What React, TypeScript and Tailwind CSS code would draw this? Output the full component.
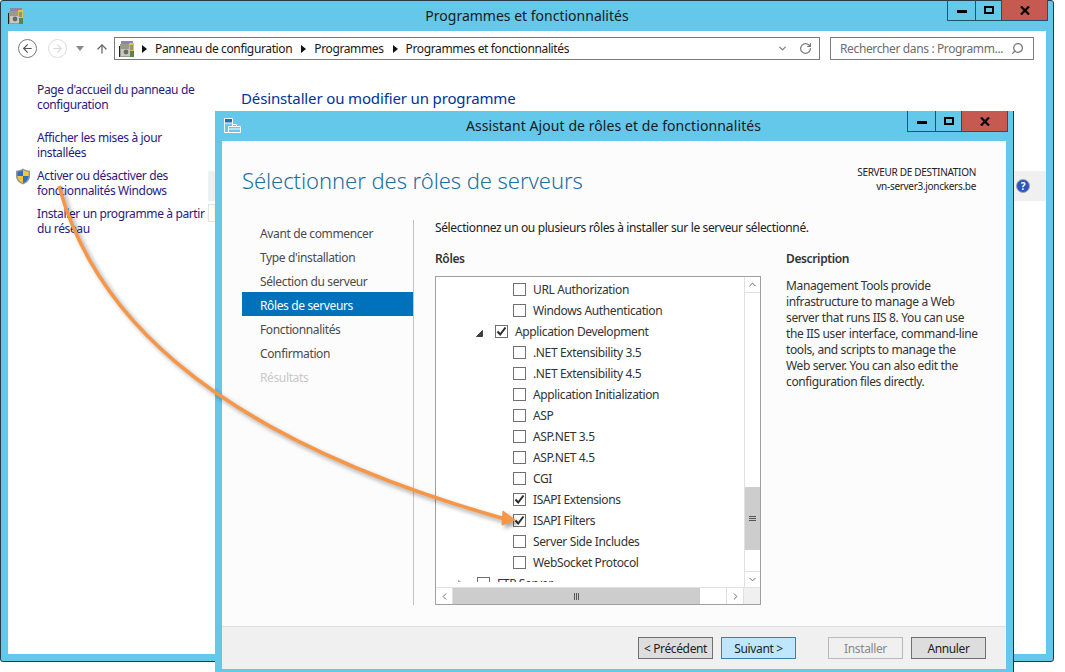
import React from 'react';
import { ArrowLeft, ArrowRight, ArrowUp, RotateCw, Search, ChevronUp, ChevronDown, ChevronLeft, ChevronRight } from 'lucide-react';

type Row = { label: string; level: number; checked?: boolean; tree?: 'open' | 'closed' };

const rows: Row[] = [
  { label: 'URL Authorization', level: 2 },
  { label: 'Windows Authentication', level: 2 },
  { label: 'Application Development', level: 1, checked: true, tree: 'open' },
  { label: '.NET Extensibility 3.5', level: 2 },
  { label: '.NET Extensibility 4.5', level: 2 },
  { label: 'Application Initialization', level: 2 },
  { label: 'ASP', level: 2 },
  { label: 'ASP.NET 3.5', level: 2 },
  { label: 'ASP.NET 4.5', level: 2 },
  { label: 'CGI', level: 2 },
  { label: 'ISAPI Extensions', level: 2, checked: true },
  { label: 'ISAPI Filters', level: 2, checked: true },
  { label: 'Server Side Includes', level: 2 },
  { label: 'WebSocket Protocol', level: 2 },
  { label: 'FTP Server', level: 0, tree: 'closed' },
];

const steps = ['Avant de commencer', "Type d'installation", 'Sélection du serveur', 'Rôles de serveurs', 'Fonctionnalités', 'Confirmation', 'Résultats'];

const links = [
  ['Page d\'accueil du panneau de', 'configuration'],
  ['Afficher les mises à jour', 'installées'],
  ['Activer ou désactiver des', 'fonctionnalités Windows'],
  ['Installer un programme à partir', 'du réseau'],
];

const WindowButtons = () => (
  <div className="flex h-[21px] -mt-px justify-self-end border border-t-0 border-[#24506a]">
    <div className="w-[28px] flex items-center justify-center border-r border-[#24506a]">
      <div className="w-[10px] h-[3px] bg-black mt-[3px]"></div>
    </div>
    <div className="w-[26px] flex items-center justify-center border-r border-[#24506a]">
      <div className="w-[10px] h-[8px] border-2 border-black"></div>
    </div>
    <div className="w-[45px] flex items-center justify-center bg-[#c45a50]">
      <svg width="10" height="9" viewBox="0 0 10 9"><path d="M1 .5 L9 8.5 M9 .5 L1 8.5" stroke="#000" strokeWidth="2.2" /></svg>
    </div>
  </div>
);

const ProgramsIcon = () => (
  <svg width="16" height="16" viewBox="0 0 16 16" className="shrink-0">
    <rect x="2" y="0" width="12" height="3" fill="#8a86b0" />
    <rect x="1" y="3" width="14" height="13" fill="#9a9a8a" />
    <rect x="10" y="2" width="5" height="8" fill="#e8c040" />
    <rect x="11" y="4" width="3" height="5" fill="#8a9a70" />
    <rect x="11" y="10" width="4" height="6" fill="#4f8a50" />
    <rect x="2" y="8" width="9" height="7" fill="#c8c8c0" />
    <circle cx="7" cy="11" r="2.4" fill="#6a6a60" />
    <rect x="0" y="5" width="1" height="11" fill="#222" />
  </svg>
);

const Shield = () => (
  <svg width="16" height="17" viewBox="0 0 16 17" className="shrink-0">
    <path d="M8 .5 C10 2 12.5 2.6 15 2.7 L15 8 C15 12 12 15 8 16.5 C4 15 1 12 1 8 L1 2.7 C3.5 2.6 6 2 8 .5 Z" fill="#8f979c" />
    <path d="M8 2 L8 8 L2.5 8 L2.5 3.8 C4.5 3.7 6.5 3 8 2 Z" fill="#2f6fc4" />
    <path d="M8 2 C9.5 3 11.5 3.7 13.5 3.8 L13.5 8 L8 8 Z" fill="#f3c832" />
    <path d="M2.5 8 L8 8 L8 15 C5 13.8 2.7 11.5 2.5 8 Z" fill="#f3c832" />
    <path d="M8 8 L13.5 8 C13.3 11.5 11 13.8 8 15 Z" fill="#2f6fc4" />
  </svg>
);

const Crumb = () => (
  <svg width="5" height="8" viewBox="0 0 5 8" className="shrink-0"><path d="M0 0 L5 4 L0 8 Z" fill="#111" /></svg>
);

const Checkbox = ({ checked }: { checked?: boolean }) => (
  <div className="w-[13px] h-[13px] shrink-0 border border-[#707070] bg-white flex items-center justify-center">
    {checked && (
      <svg width="11" height="11" viewBox="0 0 11 11"><path d="M1.5 5.5 L4.2 8.5 L9.5 1.5" fill="none" stroke="#2b2b2b" strokeWidth="2" /></svg>
    )}
  </div>
);

const ScrollBtn = ({ children, className }: { children: React.ReactNode; className: string }) => (
  <div className={`flex items-center justify-center text-[#606060] ${className}`}>{children}</div>
);

const TreeRow = ({ row }: { row: Row }) => (
  <div className={`h-[21px] flex items-center whitespace-nowrap ${row.level === 2 ? 'pl-[77px]' : row.level === 1 ? 'pl-[59px]' : 'pl-[41px]'}`}>
    {row.tree && (
      <div className="w-0 relative">
        {row.tree === 'open' ? (
          <svg width="7" height="7" viewBox="0 0 7 7" className={row.level === 1 ? '-ml-[19px] mt-[3px]' : ''}><path d="M6.5 .5 L6.5 6.5 L.5 6.5 Z" fill="#404040" stroke="#404040" /></svg>
        ) : (
          <svg width="6" height="8" viewBox="0 0 6 8" className="-ml-[19px]"><path d="M.5 .5 L5 4 L.5 7.5 Z" fill="#fff" stroke="#a0a0a0" /></svg>
        )}
      </div>
    )}
    <Checkbox checked={row.checked} />
    <span className="ml-[7px] text-[#333]">{row.label}</span>
  </div>
);

const FooterBtn = ({ label, tone }: { label: string; tone: 'normal' | 'focus' | 'off' }) => {
  const cls = tone === 'focus' ? 'bg-[#bee6fd] border-[#3c7fb1] text-[#222]' : tone === 'off' ? 'bg-[#f0f0f0] border-[#b9b9b9] text-[#8a8a8a]' : 'bg-[#dddddd] border-[#707070] text-[#222]';
  return <div className={`w-[75px] h-[22px] border flex items-center justify-center ${cls}`}>{label}</div>;
};

export default function App() {
  return (
    <div className="relative w-[1065px] h-[672px] overflow-hidden bg-white text-[12px] leading-[15px] tracking-[-0.37px] font-['Noto_Sans',sans-serif]">
      {/* back window */}
      <div className="absolute left-0 top-0 w-[1054px] h-[662px] flex flex-col border border-[#2b3a42] rounded-[3px] bg-[#63c8ea] px-[7px] pb-[7px]">
        <div className="h-[30px] -mx-[2px] grid grid-cols-[1fr_auto_1fr] items-start shrink-0">
          <div className="mt-[7px] ml-[2px]"><ProgramsIcon /></div>
          <div className="text-[14px] leading-[30px] tracking-normal text-[#1a1a1a]">Programmes et fonctionnalités</div>
          <WindowButtons />
        </div>
        <div className="flex-1 bg-white flex flex-col min-h-0">
          <div className="h-[35px] pt-[6px] flex items-start shrink-0">
            <div className="h-[23px] flex items-center">
              <div className="ml-[10px] w-[19px] h-[19px] rounded-full border border-[#7a7a7a] flex items-center justify-center text-[#555]"><ArrowLeft size={13} strokeWidth={2} /></div>
              <div className="ml-[11px] w-[19px] h-[19px] rounded-full border border-[#dcdcdc] flex items-center justify-center text-[#d8d8d8]"><ArrowRight size={13} strokeWidth={2} /></div>
              <svg width="8" height="5" viewBox="0 0 8 5" className="ml-[9px]"><path d="M0 0 H8 L4 5 Z" fill="#8a8a8a" /></svg>
              <div className="ml-[11px] text-[#666]"><ArrowUp size={14} strokeWidth={2.2} /></div>
            </div>
            <div className="ml-[5px] w-[706px] h-[23px] border border-[#7a7a7a] flex items-center pl-[4px] pr-[7px]">
              <ProgramsIcon />
              <div className="ml-[7px]"><Crumb /></div>
              <span className="ml-[8px] text-[#1a1a1a]">Panneau de configuration</span>
              <div className="ml-[9px]"><Crumb /></div>
              <span className="ml-[8px] text-[#1a1a1a]">Programmes</span>
              <div className="ml-[9px]"><Crumb /></div>
              <span className="ml-[8px] text-[#1a1a1a]">Programmes et fonctionnalités</span>
              <div className="ml-auto flex items-center gap-[11px] text-[#777]">
                <ChevronDown size={11} strokeWidth={2.5} />
                <RotateCw size={13} strokeWidth={2.2} />
              </div>
            </div>
            <div className="ml-[10px] w-[204px] h-[23px] border border-[#7a7a7a] flex items-center pl-[9px] pr-[9px] text-[#6d6d6d]">
              <span className="whitespace-nowrap">Rechercher dans : Programm...</span>
              <Search size={13} strokeWidth={2.4} className="ml-auto -scale-x-100 text-[#777]" />
            </div>
          </div>
          <div className="flex-1 flex min-h-0">
            <div className="w-[200px] shrink-0 pt-[16px] pl-[7px] flex flex-col gap-[8px] text-[#2a1a80]">
              {links.map((l, i) => (
                <div key={i} className={`flex gap-[6px] whitespace-nowrap ${i === 1 ? 'mt-[10px]' : ''}`}>
                  <div className="w-[16px] shrink-0">{i === 2 && <Shield />}</div>
                  <div>{l[0]}<br />{l[1]}</div>
                </div>
              ))}
            </div>
            <div className="flex-1 flex flex-col">
              <div className="pl-[33px] pt-[22px] h-[105px] shrink-0 text-[15px] leading-[20px] tracking-[-0.14px] text-[#003399] whitespace-nowrap">Désinstaller ou modifier un programme</div>
              <div className="h-[30px] bg-[#f0f0f0] flex items-center justify-end pr-[16px] shrink-0">
                <div className="w-[14px] h-[14px] rounded-full bg-[#2b55b8] border border-[#9aa4b8] text-white text-[10px] leading-[12px] font-bold text-center">?</div>
              </div>
              <div className="mt-[3px] h-[18px] w-[20px] border border-[#e2e2e2] pl-[5px]">
                <div className="w-[3px] h-full bg-[#fbf6d0]"></div>
              </div>
            </div>
          </div>
        </div>
      </div>

      {/* wizard window */}
      <div className="absolute left-[215px] top-[111px] w-[799px] h-[561px] flex flex-col border-r border-[#24343c] bg-[#63c8ea] px-[7px] pb-[3px]">
        <div className="h-[30px] -ml-[7px] -mr-[2px] pr-0 grid grid-cols-[1fr_auto_1fr] items-start shrink-0">
          <svg width="18" height="16" viewBox="0 0 18 16" className="mt-[6px] ml-[8px]">
            <path d="M1.5 1.5 H9.5 V6 H1.5 Z" fill="#1b6fc0" stroke="#fff" />
            <path d="M1.5 6 V15.5 H5.5 M9.5 6 V8.5" fill="none" stroke="#fff" />
            <path d="M5.5 9.5 H17.5 V15.5 H5.5 Z M9.5 9.5 V7.5 H13.5 V9.5 M5.5 12 H17.5" fill="#63c8ea" stroke="#fff" />
          </svg>
          <div className="pl-[4px] text-[14px] leading-[30px] tracking-[0.07px] text-[#1a1a1a]">Assistant Ajout de rôles et de fonctionnalités</div>
          <div className="mt-px justify-self-end"><WindowButtons /></div>
        </div>
        <div className="flex-1 flex flex-col min-h-0 bg-[#fcfcfc]">
          <div className="h-[485px] flex flex-col shrink-0">
            <div className="h-[79px] flex justify-between shrink-0">
              <div className="ml-[20px] mt-[21px] text-[22px] leading-[36px] tracking-[-0.06px] font-light text-[#1e6f9f] whitespace-nowrap">Sélectionner des rôles de serveurs</div>
              <div className="mt-[24px] mr-[30px] text-right text-[10px] leading-[14px] tracking-[-0.3px] text-[#222] whitespace-nowrap">
                <div>SERVEUR DE DESTINATION</div>
                <div>vn-server3.jonckers.be</div>
              </div>
            </div>
            <div className="flex flex-1 min-h-0">
              <div className="ml-[20px] w-[172px] h-[385px] shrink-0 border-r border-[#c4c4c4]">
                {steps.map((s, i) => (
                  <div key={s} className={`w-[171px] h-[24px] pl-[18px] pt-[2px] flex items-center text-[#4a4a4a] ${i === 3 ? 'bg-[#0072bc] text-white' : ''} ${i === 6 ? 'text-[#c8c8c8]' : ''}`}>{s}</div>
                ))}
              </div>
              <div className="ml-[21px] w-[326px] shrink-0 flex flex-col">
                <div className="text-[#222] h-[31px] whitespace-nowrap">Sélectionnez un ou plusieurs rôles à installer sur le serveur sélectionné.</div>
                <div className="font-semibold text-[#333] h-[25px]">Rôles</div>
                <div className="h-[329px] border border-[#a0a0a0] bg-white flex flex-col">
                  <div className="h-[310px] flex">
                    <div className="flex-1 min-w-0">
                      <div className="h-[305px] overflow-hidden pt-[2px]">
                        {rows.map(r => <TreeRow key={r.label} row={r} />)}
                      </div>
                    </div>
                    <div className="w-[16px] flex flex-col bg-white border-l border-[#e0e0e0]">
                      <ScrollBtn className="h-[16px] border-b border-[#e0e0e0]"><ChevronUp size={11} strokeWidth={2} /></ScrollBtn>
                      <div className="flex-1 pt-[194px]">
                        <div className="h-[63px] bg-[#cdcdcd] flex flex-col items-center justify-center gap-[1px]">
                          <div className="w-[7px] h-px bg-[#555]"></div>
                          <div className="w-[7px] h-px bg-[#555]"></div>
                          <div className="w-[7px] h-px bg-[#555]"></div>
                        </div>
                      </div>
                      <ScrollBtn className="h-[16px] border-t border-[#e0e0e0]"><ChevronDown size={11} strokeWidth={2} /></ScrollBtn>
                    </div>
                  </div>
                  <div className="h-[17px] flex border-t border-[#e0e0e0]">
                    <ScrollBtn className="w-[17px] border-r border-[#e0e0e0]"><ChevronLeft size={11} strokeWidth={2} /></ScrollBtn>
                    <div className="w-[247px] bg-[#cdcdcd] flex items-center justify-center gap-[1px]">
                      <div className="w-px h-[7px] bg-[#555]"></div>
                      <div className="w-px h-[7px] bg-[#555]"></div>
                      <div className="w-px h-[7px] bg-[#555]"></div>
                    </div>
                    <div className="w-[26px]"></div>
                    <ScrollBtn className="w-[18px] border-l border-r border-[#e0e0e0]"><ChevronRight size={11} strokeWidth={2} /></ScrollBtn>
                    <div className="flex-1 bg-[#f0f0f0]"></div>
                  </div>
                </div>
              </div>
              <div className="ml-[25px] text-[#333] whitespace-nowrap">
                <div className="font-semibold h-[31px] pt-[31px] box-content">Description</div>
                <div className="mt-[-4px] leading-[16px]">
                  Management Tools provide<br />
                  infrastructure to manage a Web<br />
                  server that runs IIS 8. You can use<br />
                  the IIS user interface, command-line<br />
                  tools, and scripts to manage the<br />
                  Web server. You can also edit the<br />
                  configuration files directly.
                </div>
              </div>
            </div>
          </div>
          <div className="flex-1 bg-[#f0f0f0] border-t border-[#dfdfdf] flex items-start pt-[10px] pl-[416px]">
            <FooterBtn label="< Précédent" tone="normal" />
            <div className="ml-[8px]"><FooterBtn label="Suivant >" tone="focus" /></div>
            <div className="ml-[32px]"><FooterBtn label="Installer" tone="off" /></div>
            <div className="ml-[8px]"><FooterBtn label="Annuler" tone="normal" /></div>
          </div>
        </div>
      </div>

      {/* callout arrow */}
      <svg width="1065" height="672" viewBox="0 0 1065 672" className="absolute left-0 top-0 pointer-events-none drop-shadow-[3px_3px_2px_rgba(0,0,0,0.35)]">
        <path d="M59 186 C90 300 190 430 505 519" fill="none" stroke="#f79646" strokeWidth="3.5" />
        <path d="M503 511 L515 520 L502 525 Z" fill="#f79646" stroke="#f79646" />
      </svg>
    </div>
  );
}
